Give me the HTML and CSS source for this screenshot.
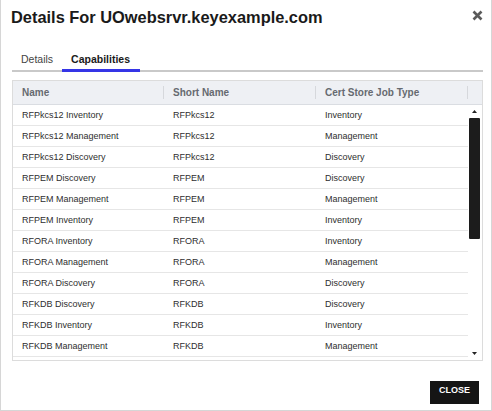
FILE: index.html
```html
<!DOCTYPE html>
<html>
<head>
<meta charset="utf-8">
<link rel="stylesheet" href="styles.css">
</head>
<body>
<div class="dialog">
  <div class="dlg-header">
    <h1 class="dlg-title">Details For UOwebsrvr.keyexample.com</h1>
    <svg class="dlg-close" width="11" height="11" viewBox="0 0 11 11"><path d="M1.5 1.5 L9.5 9.5 M9.5 1.5 L1.5 9.5" stroke="#5a5a5a" stroke-width="2.6" stroke-linecap="butt"/></svg>
  </div>
  <div class="tabs">
    <div class="tab">Details</div>
    <div class="tab active">Capabilities</div>
  </div>
  <div class="grid">
    <div class="grid-head">
      <div class="th">Name</div>
      <div class="th">Short Name</div>
      <div class="th">Cert Store Job Type</div>
      <div class="th th-sb"></div>
    </div>
    <div class="grid-body">
      <div class="rows">
        <div class="row"><div class="td">RFPkcs12 Inventory</div><div class="td">RFPkcs12</div><div class="td">Inventory</div></div>
        <div class="row"><div class="td">RFPkcs12 Management</div><div class="td">RFPkcs12</div><div class="td">Management</div></div>
        <div class="row"><div class="td">RFPkcs12 Discovery</div><div class="td">RFPkcs12</div><div class="td">Discovery</div></div>
        <div class="row"><div class="td">RFPEM Discovery</div><div class="td">RFPEM</div><div class="td">Discovery</div></div>
        <div class="row"><div class="td">RFPEM Management</div><div class="td">RFPEM</div><div class="td">Management</div></div>
        <div class="row"><div class="td">RFPEM Inventory</div><div class="td">RFPEM</div><div class="td">Inventory</div></div>
        <div class="row"><div class="td">RFORA Inventory</div><div class="td">RFORA</div><div class="td">Inventory</div></div>
        <div class="row"><div class="td">RFORA Management</div><div class="td">RFORA</div><div class="td">Management</div></div>
        <div class="row"><div class="td">RFORA Discovery</div><div class="td">RFORA</div><div class="td">Discovery</div></div>
        <div class="row"><div class="td">RFKDB Discovery</div><div class="td">RFKDB</div><div class="td">Discovery</div></div>
        <div class="row"><div class="td">RFKDB Inventory</div><div class="td">RFKDB</div><div class="td">Inventory</div></div>
        <div class="row"><div class="td">RFKDB Management</div><div class="td">RFKDB</div><div class="td">Management</div></div>
      </div>
      <div class="scrollbar">
        <div class="sb-btn"><svg width="5" height="3" viewBox="0 0 5 3"><path d="M0 3 L2.5 0 L5 3 Z" fill="#222"/></svg></div>
        <div class="sb-thumb"></div>
        <div class="sb-space"></div>
        <div class="sb-btn"><svg width="5" height="3" viewBox="0 0 5 3"><path d="M0 0 L5 0 L2.5 3 Z" fill="#222"/></svg></div>
      </div>
    </div>
  </div>
  <div class="dlg-footer">
    <button class="btn-close">CLOSE</button>
  </div>
</div>
</body>
</html>
```

FILE: styles.css
```css
html, body {
  margin: 0;
  padding: 0;
  background: #ffffff;
}
body {
  font-family: "Liberation Sans", Arial, sans-serif;
  color: #333333;
}
.dialog {
  box-sizing: border-box;
  width: 492px;
  height: 411px;
  border: 1px solid #d6d6d6;
  border-top: none;
  padding: 0 8px 0 11px;
  background: #ffffff;
  overflow: hidden;
}
.dlg-header {
  display: flex;
  justify-content: space-between;
  align-items: flex-start;
  padding-top: 7px;
}
.dlg-title {
  margin: 0 0 0 -1px;
  font-size: 16.4px;
  line-height: 20px;
  font-weight: bold;
  color: #1a1a1a;
}
.dlg-close {
  display: block;
  margin-top: 3px;
  margin-right: 0;
}
.tabs {
  display: flex;
  margin-top: 26px;
  border-bottom: 2px solid #c9c9c9;
}
.tab {
  font-size: 10.5px;
  line-height: 12px;
  padding: 0 9px 4px 9px;
  border-bottom: 3px solid transparent;
  margin-bottom: -2px;
  color: #444444;
}
.tab.active {
  font-weight: bold;
  color: #1a1a1a;
  border-bottom-color: #3535e6;
  padding-right: 10px;
}
.grid {
  margin-top: 8px;
  border: 1px solid #dcdcdc;
}
.grid-head {
  display: grid;
  grid-template-columns: 151px 152px 152px 13px;
  background: #eef0f4;
  border-bottom: 1px solid #dadde2;
}
.th {
  box-sizing: border-box;
  height: 13px;
  margin: 5px 0;
  line-height: 13px;
  padding-left: 9px;
  font-size: 10px;
  font-weight: bold;
  color: #666a70;
  border-right: 1px solid #d6d8dc;
}
.th.th-sb {
  border-right: none;
}
.grid-body {
  display: flex;
  height: 255px;
  overflow: hidden;
}
.rows {
  width: 455px;
}
.row {
  display: grid;
  grid-template-columns: 151px 152px 152px;
  height: 20px;
  border-bottom: 1px solid #e6e6e6;
}
.td {
  padding-left: 9px;
  font-size: 9px;
  line-height: 20px;
  color: #2e2e2e;
  white-space: nowrap;
}
.scrollbar {
  width: 13px;
  display: flex;
  flex-direction: column;
  align-items: center;
}
.sb-btn {
  height: 13px;
  width: 13px;
  display: flex;
  align-items: center;
  justify-content: center;
}
.sb-btn svg {
  display: block;
}
.sb-thumb {
  width: 11px;
  height: 121px;
  background: #1c1c1c;
  border-radius: 1px;
}
.sb-space {
  flex: 1;
}
.dlg-footer {
  display: flex;
  justify-content: flex-end;
  padding-top: 20px;
}
.btn-close {
  margin: 0 4px 0 0;
  width: 49px;
  height: 23px;
  padding: 3px 0 8px 0;
  border: none;
  background: #151515;
  color: #ffffff;
  font-family: "Liberation Sans", Arial, sans-serif;
  font-size: 9px;
  line-height: 12px;
  font-weight: bold;
  text-align: center;
}
```
